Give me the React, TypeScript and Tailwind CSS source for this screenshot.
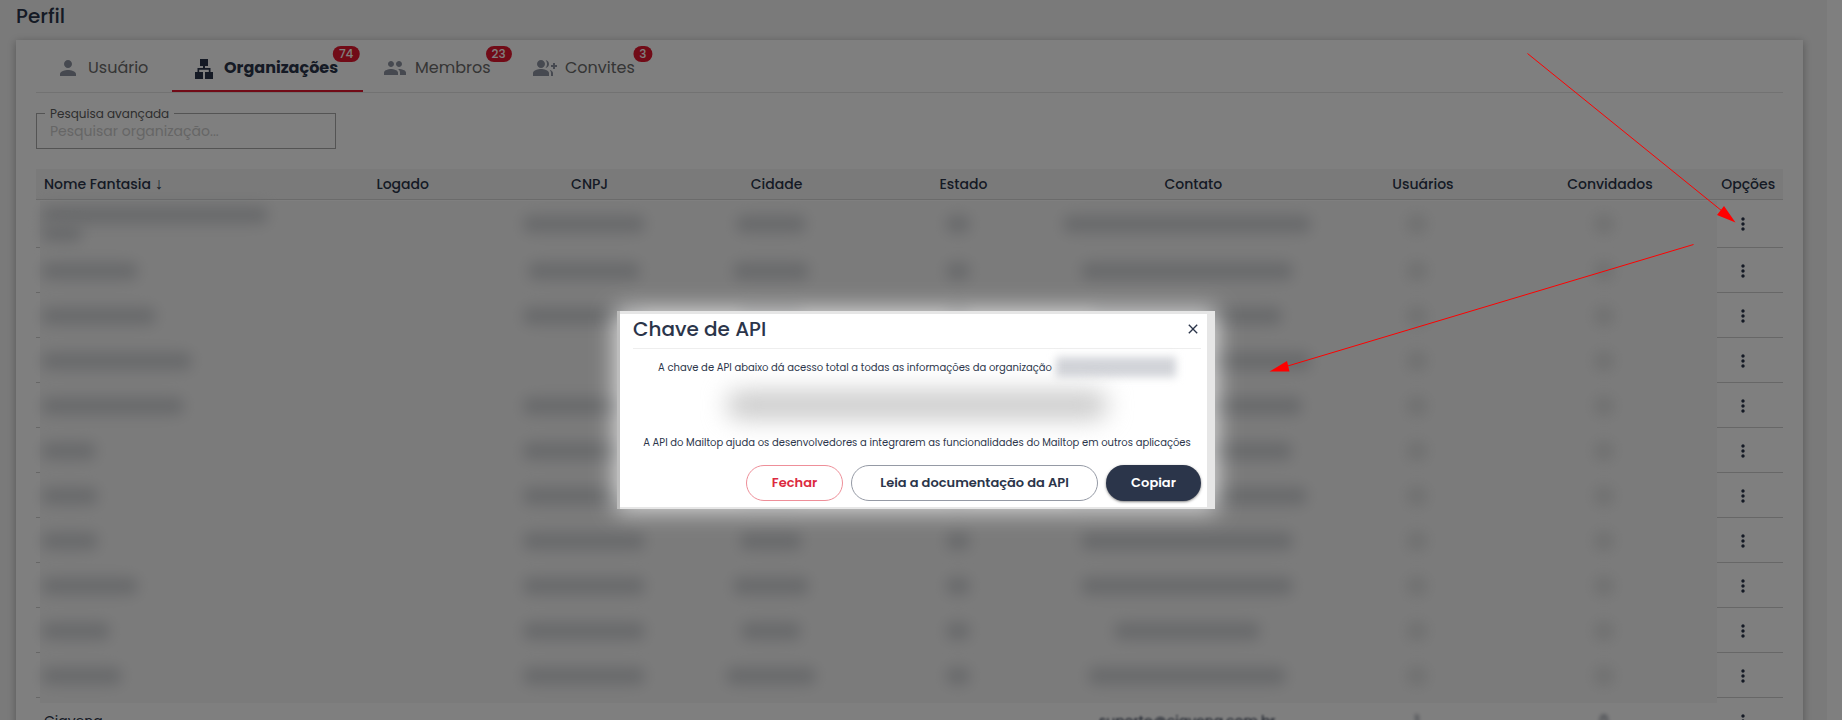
import type { ReactNode } from "react";
import { clsx } from "clsx";
import { MdClose, MdGroup, MdGroupAdd, MdMoreVert, MdPerson } from "react-icons/md";

interface Tab {
  label: string;
  icon: ReactNode;
  width: string;
  badge?: number;
  active?: boolean;
}

interface Organization {
  name: number[];
  cnpj: number;
  city: number;
  state: number;
  contact: number;
}

function SitemapIcon() {
  return (
    <svg viewBox="0 0 24 24" className="h-6 w-6" fill="currentColor" aria-hidden="true">
      <path d="M8 3h8v7h-3v2h5.500v4H21v7h-8v-7h3.800v-2.300H7.200V16H11v7H3v-7h2.500v-4H11v-2H8z" />
    </svg>
  );
}

const TABS: Tab[] = [
  { label: "Usuário", icon: <MdPerson className="h-6 w-6" />, width: "w-[136px]" },
  { label: "Organizações", icon: <SitemapIcon />, width: "w-[191px]", badge: 74, active: true },
  { label: "Membros", icon: <MdGroup className="h-6 w-6" />, width: "w-[150px]", badge: 23 },
  { label: "Convites", icon: <MdGroupAdd className="h-6 w-6" />, width: "w-[150px]", badge: 3 },
];

const COLUMNS = [
  { label: "Logado", style: "w-[10.7%] pl-3" },
  { label: "CNPJ", style: "w-[10.7%] pl-3" },
  { label: "Cidade", style: "w-[10.7%] pl-3" },
  { label: "Estado", style: "w-[10.7%] pl-3" },
  { label: "Contato", style: "w-[15.6%] pl-3" },
  { label: "Usuários", style: "w-[10.7%] pl-3" },
  { label: "Convidados", style: "w-[10.7%] pl-3" },
  { label: "Opções", style: "w-[4.9%] pl-4" },
];

// widths of the redacted values, in px
const ORGANIZATIONS: Organization[] = [
  { name: [226, 40], cnpj: 122, city: 70, state: 24, contact: 248 },
  { name: [96], cnpj: 112, city: 76, state: 24, contact: 212 },
  { name: [114], cnpj: 122, city: 64, state: 24, contact: 190 },
  { name: [150], cnpj: 0, city: 64, state: 24, contact: 248 },
  { name: [142], cnpj: 122, city: 64, state: 24, contact: 230 },
  { name: [54], cnpj: 122, city: 64, state: 24, contact: 210 },
  { name: [56], cnpj: 122, city: 64, state: 24, contact: 240 },
  { name: [56], cnpj: 122, city: 62, state: 24, contact: 212 },
  { name: [96], cnpj: 122, city: 76, state: 24, contact: 212 },
  { name: [68], cnpj: 122, city: 60, state: 24, contact: 146 },
  { name: [80], cnpj: 122, city: 90, state: 24, contact: 198 },
];

function Redacted({ width, faint = false }: { width: number; faint?: boolean }) {
  return (
    <div
      className={clsx("h-[18px] rounded-lg blur-[7px]", faint ? "bg-[#dcdddd]" : "bg-[#d2d4d7]")}
      style={{ width }}
    />
  );
}

function OptionsButton() {
  return (
    <button type="button" aria-label="Opções" className="block">
      <MdMoreVert className="h-5 w-5" />
    </button>
  );
}

function Tabs() {
  return (
    <nav className="flex border-b border-[#e4e4e4]">
      {TABS.map((tab) => (
        <button
          key={tab.label}
          type="button"
          className={clsx(
            "flex h-[52px] items-center gap-2 border-b-2 pt-1.5 pr-2 pl-5 text-base",
            tab.width,
            tab.active
              ? "border-[#e3172e] font-bold text-[#2b354a]"
              : "border-transparent text-[#6b6b6b]"
          )}
        >
          <span className={tab.active ? "" : "text-[#8d93a1]"}>{tab.icon}</span>
          <span className="relative">
            {tab.label}
            {tab.badge && (
              <span className="absolute -top-2.5 left-full ml-2 -translate-x-1/2 rounded-full bg-[#e3172e] px-1.5 text-xs leading-4 font-medium text-white">
                {tab.badge}
              </span>
            )}
          </span>
        </button>
      ))}
    </nav>
  );
}

function OrganizationsTable() {
  return (
    <div className="relative mt-5">
      <div className="absolute top-8 right-[66px] bottom-[40px] left-1 bg-[#f7f7f7]" />
      <table className="w-full table-fixed border-collapse text-sm text-[#2b354a]">
        <thead>
          <tr className="h-[30px] border-b border-[#d6d6d6] bg-[#f4f4f4]">
            <th className="w-[15.3%] pl-2 text-left font-medium whitespace-nowrap">
              Nome Fantasia{" "}
              <span className="font-['Liberation_Sans'] text-base leading-4">↓</span>
            </th>
            {COLUMNS.map((column) => (
              <th key={column.label} className={clsx("font-medium", column.style)}>
                {column.label}
              </th>
            ))}
          </tr>
        </thead>
        <tbody>
          {ORGANIZATIONS.map((org, i) => (
            <tr
              key={i}
              className={clsx(
                "bg-[linear-gradient(#cfcfcf,#cfcfcf),linear-gradient(#cfcfcf,#cfcfcf)] bg-[size:4px_1px,66px_1px] bg-[position:left_bottom,right_bottom] bg-no-repeat",
                i === 0 ? "h-[49px]" : "h-[45px]"
              )}
            >
              <td className="pl-1.5">
                <div className="relative">
                  {org.name.map((width) => (
                    <Redacted key={width} width={width} />
                  ))}
                </div>
              </td>
              <td />
              {[org.cnpj, org.city, org.state, org.contact].map((width, j) => (
                <td key={j}>
                  <div className="relative flex justify-center">
                    <Redacted width={width} />
                  </div>
                </td>
              ))}
              {[0, 1].map((n) => (
                <td key={n}>
                  <div className="relative flex justify-center">
                    <Redacted width={18} faint />
                  </div>
                </td>
              ))}
              <td className="pl-1.5">
                <div className="flex justify-center">
                  <OptionsButton />
                </div>
              </td>
            </tr>
          ))}
          <tr className="h-[45px] text-center">
            <td className="pl-2 text-left">Ciavena</td>
            <td />
            <td className="font-bold">--</td>
            <td>--</td>
            <td>--</td>
            <td className="blur-[1px]">suporte@ciavena.com.br</td>
            <td className="blur-[2px]">1</td>
            <td className="blur-[2px]">0</td>
            <td className="pl-1.5">
              <div className="flex justify-center">
                <OptionsButton />
              </div>
            </td>
          </tr>
        </tbody>
      </table>
    </div>
  );
}

function ApiKeyDialog() {
  return (
    <div
      role="dialog"
      aria-labelledby="api-key-title"
      className="w-[598px] border-l-[3px] border-[#bdbdbd] bg-[#e6e6e6] pt-[3px] pr-2 pb-0.5 text-[#2b354a] shadow-[0_0_22px_2px_rgba(255,255,255,0.75)]"
    >
      <div className="bg-white pr-1.5 pb-1.5 pl-[13px]">
        <div className="flex h-[35px] items-center justify-between border-b border-[#eeeeee] pb-1">
          <h2 id="api-key-title" className="text-xl font-medium">
            Chave de API
          </h2>
          <button type="button" aria-label="Fechar janela">
            <MdClose className="h-4 w-4" />
          </button>
        </div>
        <p className="mt-2 flex h-5 items-center justify-center text-[10px] whitespace-nowrap">
          A chave de API abaixo dá acesso total a todas as informações da organização
          <span className="ml-1 h-5 w-[120px] bg-[#d2d4d9] blur-[4px]" />
        </p>
        <div className="mt-0.5 flex h-[52px] items-center justify-center">
          <div className="h-7 w-[380px] rounded-xl bg-[#c9c9c9] blur-[12px]" />
        </div>
        <p className="flex h-[22px] items-center justify-center text-[10px] whitespace-nowrap">
          A API do Mailtop ajuda os desenvolvedores a integrarem as funcionalidades do Mailtop em
          outros aplicações
        </p>
        <div className="mt-3 flex justify-end gap-2 text-[13px] font-semibold">
          <button
            type="button"
            className="h-9 w-[97px] rounded-full border border-[#ee8f99] text-[#dc2a40]"
          >
            Fechar
          </button>
          <button type="button" className="h-9 w-[247px] rounded-full border border-[#959aa5]">
            Leia a documentação da API
          </button>
          <button
            type="button"
            className="h-9 w-[95px] rounded-full bg-[#2b354a] text-white shadow-sm shadow-black/40"
          >
            Copiar
          </button>
        </div>
      </div>
    </div>
  );
}

function Arrows() {
  return (
    <svg
      width="1842"
      height="720"
      className="pointer-events-none absolute top-0 left-0"
      stroke="#ff0000"
      fill="#ff0000"
      aria-hidden="true"
    >
      <path d="M1527.500 53.500 1722 211M1693.500 244.500 1286 366.500" fill="none" />
      <path
        d="M1735.500 222.500 1717 215 1724 206ZM1269.500 371.500 1287 361 1289.500 371.500Z"
        stroke="none"
      />
    </svg>
  );
}

export default function App() {
  return (
    <div className="relative h-screen overflow-hidden bg-white font-['Poppins','Inter',sans-serif]">
      <main className="mr-[15px] min-h-screen bg-[#f4f4f4] pr-6 pl-4">
        <h1 className="flex h-10 items-center pb-2 text-xl font-medium text-[#2b354a]">Perfil</h1>
        <section className="bg-white px-5 shadow-[0_2px_8px_rgba(0,0,0,0.3)]">
          <Tabs />
          <div className="relative mt-5 h-9 w-[300px] border border-[#a8a8a8]">
            <label
              htmlFor="search"
              className="absolute -top-2 left-2 bg-white px-[5px] text-xs leading-4 text-[#5c5c5c]"
            >
              Pesquisa avançada
            </label>
            <input
              id="search"
              type="text"
              placeholder="Pesquisar organização..."
              className="h-full w-full bg-transparent px-[13px] text-sm outline-none placeholder:text-[#cccccc]"
            />
          </div>
          <OrganizationsTable />
        </section>
      </main>

      <div className="absolute inset-0 flex items-start justify-center bg-black/50 pt-[311px] pr-[10px]">
        <ApiKeyDialog />
      </div>
      <Arrows />
    </div>
  );
}
